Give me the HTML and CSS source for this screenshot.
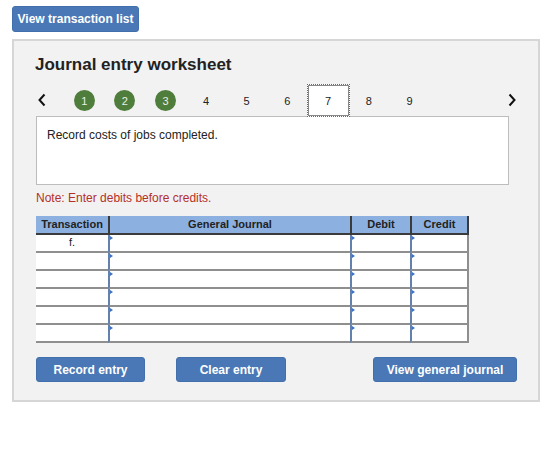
FILE: index.html
```html
<!DOCTYPE html>
<html lang="en">
<head>
  <meta charset="UTF-8" />
  <meta name="viewport" content="width=device-width, initial-scale=1.0" />
  <title>Journal entry worksheet</title>
  <link rel="stylesheet" href="styles.css">
</head>
<body>
  <button class="btn top-btn">View transaction list</button>

  <div class="panel">
    <h2>Journal entry worksheet</h2>

    <div class="steps">
      <span class="arrow">
        <svg width="10" height="14" viewBox="0 0 10 14"><polyline points="7.5,1.5 2.5,7 7.5,12.5" fill="none" stroke="#111" stroke-width="2"/></svg>
      </span>
      <span class="step"><span class="done">1</span></span>
      <span class="step"><span class="done">2</span></span>
      <span class="step"><span class="done">3</span></span>
      <span class="step">4</span>
      <span class="step">5</span>
      <span class="step">6</span>
      <span class="step current">7</span>
      <span class="step">8</span>
      <span class="step">9</span>
      <span class="arrow next">
        <svg width="10" height="14" viewBox="0 0 10 14"><polyline points="2.5,1.5 7.5,7 2.5,12.5" fill="none" stroke="#111" stroke-width="2"/></svg>
      </span>
    </div>

    <div class="task">Record costs of jobs completed.</div>

    <p class="note">Note: Enter debits before credits.</p>

    <div class="journal">
      <div class="th">Transaction</div>
      <div class="th">General Journal</div>
      <div class="th">Debit</div>
      <div class="th">Credit</div>

      <div class="td">f.</div><div class="td in"></div><div class="td in"></div><div class="td in last"></div>
      <div class="td"></div><div class="td in"></div><div class="td in"></div><div class="td in last"></div>
      <div class="td"></div><div class="td in"></div><div class="td in"></div><div class="td in last"></div>
      <div class="td"></div><div class="td in"></div><div class="td in"></div><div class="td in last"></div>
      <div class="td"></div><div class="td in"></div><div class="td in"></div><div class="td in last"></div>
      <div class="td"></div><div class="td in"></div><div class="td in"></div><div class="td in last"></div>
    </div>

    <div class="actions">
      <button class="btn record">Record entry</button>
      <button class="btn clear">Clear entry</button>
      <button class="btn view">View general journal</button>
    </div>
  </div>
</body>
</html>
```

FILE: styles.css
```css
body {
  margin: 0;
  padding: 6px 12px;
  font-family: 'Liberation Sans', Arial, sans-serif;
  color: #222;
  background: #fff;
}
.btn {
  display: block;
  flex-shrink: 0;
  background: #4a78b6;
  color: #fff;
  border: 1px solid #4270ad;
  border-radius: 3px;
  font-family: 'Liberation Sans', Arial, sans-serif;
  font-weight: bold;
  font-size: 12px;
  height: 26px;
  padding: 0;
  white-space: nowrap;
  cursor: pointer;
}
.top-btn {
  width: 127px;
}
.panel {
  margin-top: 7px;
  width: 528px;
  height: 363px;
  box-sizing: border-box;
  background: #f2f2f2;
  border: 2px solid #d6d6d6;
  padding: 14px 29px 0 22px;
}
h2 {
  margin: 0 0 0 -1px;
  font-size: 17px;
  line-height: 20px;
}
.steps {
  display: flex;
  align-items: center;
  height: 33px;
  margin-top: 9px;
  margin-right: -8px;
  font-size: 11px;
}
.arrow {
  width: 27px;
  padding-left: 1px;
  display: flex;
  align-items: center;
  margin-top: -2px;
}
.arrow.next {
  margin-left: auto;
  width: auto;
}
.step {
  width: 40.6px;
  height: 33px;
  display: flex;
  align-items: center;
  justify-content: center;
}
.done {
  width: 21px;
  height: 21px;
  border-radius: 50%;
  background: #4f7d3c;
  color: #e8f0e4;
  display: flex;
  align-items: center;
  justify-content: center;
  font-size: 11px;
}
.step.current {
  width: 43px;
  margin: 0 -1px;
  box-sizing: border-box;
  background: #fff;
  border: 1px dotted #4a6fb0;
  outline: 1px solid #888;
  outline-offset: -2px;
  position: relative;
  z-index: 1;
}
.task {
  margin-top: -1px;
  height: 69px;
  box-sizing: border-box;
  background: #fff;
  border: 1px solid #bdbdbd;
  padding: 11px 10px;
  font-size: 12px;
}
.note {
  margin: 6px 0 0;
  color: #b4302a;
  font-size: 12px;
  line-height: 14px;
}
.journal {
  margin-top: 11px;
  display: grid;
  grid-template-columns: 72px 242px 60px 59px;
  font-size: 11px;
}
.th {
  height: 19px;
  box-sizing: border-box;
  background: #8cb1e1;
  border-bottom: 2px solid #3b3b3b;
  border-left: 2px solid #3b3b3b;
  font-weight: bold;
  text-align: center;
  line-height: 17px;
}
.th:first-child {
  border-left: none;
}
.th:nth-child(4) {
  border-right: 2px solid #3b3b3b;
}
.td {
  height: 18px;
  box-sizing: border-box;
  background: #fff;
  border-bottom: 2px solid #8f8f8f;
  text-align: center;
  line-height: 14px;
}
.td.in {
  position: relative;
  border-left: 2px solid #6480ad;
}
.td.in::before {
  content: "";
  position: absolute;
  top: 1px;
  left: 0;
  border-top: 2px solid transparent;
  border-bottom: 2px solid transparent;
  border-left: 3px solid #3c72c6;
}
.td.last {
  border-right: 2px solid #8f8f8f;
}
.actions {
  display: flex;
  margin-top: 14px;
}
.record {
  width: 109px;
  height: 25px;
}
.clear {
  width: 110px;
  height: 25px;
  margin-left: 31px;
}
.view {
  width: 144px;
  height: 25px;
  margin-left: 87px;
}
```
